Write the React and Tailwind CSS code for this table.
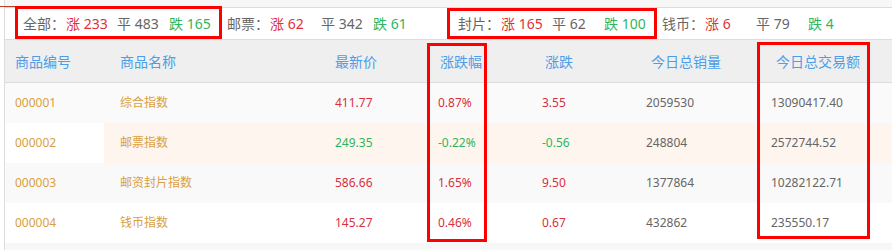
import React from 'react';

const FONT = { fontFamily: '"Noto Sans", "Noto Sans CJK SC", sans-serif' };

const groups = [
  { label: '全部：', up: 233, flat: 483, down: 165, w: 'w-[204px]' },
  { label: '邮票：', up: 62, flat: 342, down: 61, w: 'w-[231px]' },
  { label: '封片：', up: 165, flat: 62, down: 100, w: 'w-[204px]' },
  { label: '钱币：', up: 6, flat: 79, down: 4, w: 'flex-1' },
];

const rows = [
  { code: '000001', name: '综合指数', price: '411.77', pct: '0.87%', chg: '3.55', vol: '2059530', amt: '13090417.40', up: true, bg: 'bg-[#fafafa]' },
  { code: '000002', name: '邮票指数', price: '249.35', pct: '-0.22%', chg: '-0.56', vol: '248804', amt: '2572744.52', up: false, bg: 'bg-white', hover: true },
  { code: '000003', name: '邮资封片指数', price: '586.66', pct: '1.65%', chg: '9.50', vol: '1377864', amt: '10282122.71', up: true, bg: 'bg-[#f9f9f9]' },
  { code: '000004', name: '钱币指数', price: '145.27', pct: '0.46%', chg: '0.67', vol: '432862', amt: '235550.17', up: true, bg: 'bg-white' },
];

const cols = 'grid grid-cols-[99px_215px_104px_104px_104px_125px_1fr]';

export default function App() {
  return (
    <div className="relative w-[892px] h-[250px] bg-white overflow-hidden" style={FONT}>
      {/* thin tab line at top left */}
      <div className="absolute left-0 top-[6px] w-[16px] h-px bg-[#c0392b]" />

      <div className="ml-[4px] pt-[7px] border-l border-[#dddddd] h-full bg-[#f7f7f7]">
        {/* stats bar */}
        <div className="flex items-center h-[33px] bg-white border-y border-[#dddddd] pl-[18px] text-[14px] text-[#666]">
          {groups.map((g) => (
            <div key={g.label} className={`flex items-center ${g.w}`}>
              <span className="w-[43px]">{g.label}</span>
              <span className="w-[51px] text-[#e0303a]">涨 {g.up}</span>
              <span className="w-[52px]">平 {g.flat}</span>
              <span className="text-[#2fb55c]">跌 {g.down}</span>
            </div>
          ))}
        </div>

        {/* table header */}
        <div className={`${cols} h-[43px] items-center bg-[#efefef] border-b border-[#dcdcdc] text-[14px] text-[#4d9de8]`}>
          <div className="pl-[10px]">商品编号</div>
          <div className="pl-4">商品名称</div>
          <div className="pl-4">最新价</div>
          <div className="pl-[17px]">涨跌幅</div>
          <div className="pl-[18px]">涨跌</div>
          <div className="pl-[20px]">今日总销量</div>
          <div className="pl-[20px]">今日总交易额</div>
        </div>

        {/* rows */}
        {rows.map((r) => {
          const tone = r.up ? 'text-[#d9303e]' : 'text-[#2fb55c]';
          const cell = r.hover ? 'bg-[#fef5ef]' : '';
          return (
            <div key={r.code} className={`${cols} h-[40px] text-[12px] ${r.bg}`}>
              <div className="pl-[10px] flex items-center text-[#d9a03f]">{r.code}</div>
              <div className={`pl-4 flex items-center text-[#d9a03f] ${cell}`}>{r.name}</div>
              <div className={`pl-4 flex items-center ${tone} ${cell}`}>{r.price}</div>
              <div className={`pl-[15px] flex items-center ${tone} ${cell}`}>{r.pct}</div>
              <div className={`pl-[15px] flex items-center ${tone} ${cell}`}>{r.chg}</div>
              <div className={`pl-[15px] flex items-center text-[#666] ${cell}`}>{r.vol}</div>
              <div className={`pl-[15px] flex items-center text-[#666] ${cell}`}>{r.amt}</div>
            </div>
          );
        })}
      </div>

      {/* red annotation boxes */}
      <div className="absolute left-[15px] top-[6px] w-[207px] h-[33px] border-[3px] border-[#ff0000]" />
      <div className="absolute left-[447px] top-[8px] w-[210px] h-[31px] border-[3px] border-[#ff0000]" />
      <div className="absolute left-[427px] top-[43px] w-[60px] h-[199px] border-[3px] border-[#ff0000]" />
      <div className="absolute left-[757px] top-[42px] w-[113px] h-[197px] border-[3px] border-[#ff0000]" />
    </div>
  );
}
